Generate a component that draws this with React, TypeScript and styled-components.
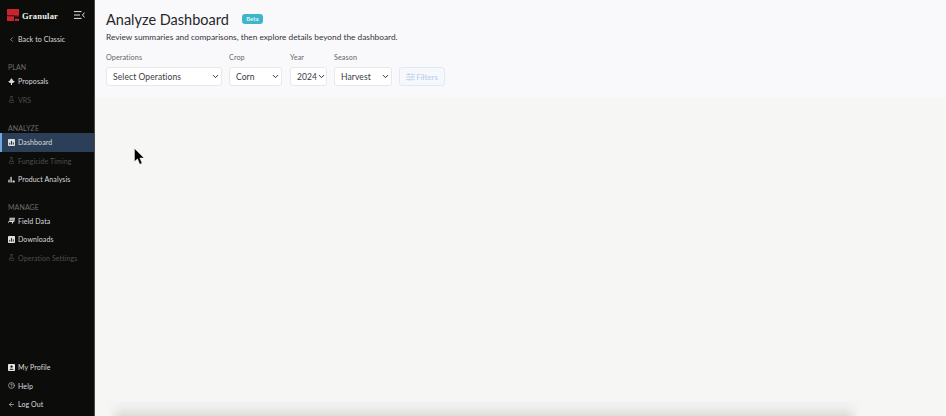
import React from 'react'
import styled, { createGlobalStyle } from 'styled-components'
import { ChevronDown, ChevronLeft, ArrowLeft, CircleHelp, FlaskConical } from 'lucide-react'

const GlobalStyle = createGlobalStyle`
  html, body {
    margin: 0;
    padding: 0;
    height: 100%;
    overflow: hidden;
    background: #f6f6f4;
    font-family: Lato, "Open Sans", sans-serif;
  }
  #root {
    height: 100%;
  }
`

const Page = styled.div`
  display: flex;
  width: 946px;
  height: 416px;
`

const Sidebar = styled.aside`
  width: 95px;
  flex: none;
  display: flex;
  flex-direction: column;
  background: #0c0c0b;
  border-right: 1px solid #4a4a4a;
  box-sizing: border-box;
`

const Brand = styled.div`
  height: 30px;
  padding: 0 9px 0 7px;
  display: flex;
  align-items: center;
`

const BrandName = styled.span`
  margin-left: 3px;
  margin-top: 1px;
  font-family: 'Liberation Serif', serif;
  font-weight: 700;
  font-size: 8.5px;
  letter-spacing: 0.2px;
  color: #f2f2f2;
  flex: 1;
`

const Section = styled.div<{ $gap: number }>`
  margin-top: ${(p) => p.$gap}px;
`

const SectionLabel = styled.div`
  height: 9px;
  line-height: 9px;
  padding-left: 8px;
  font-size: 7px;
  letter-spacing: 0.1px;
  color: #6c6c6c;
`

const NavItem = styled.div<{ $active?: boolean; $muted?: boolean }>`
  height: 18.5px;
  display: flex;
  align-items: center;
  gap: 3px;
  box-sizing: border-box;
  padding-left: ${(p) => (p.$active ? 6 : 8)}px;
  border-left: ${(p) => (p.$active ? '2px solid #6ea6e6' : 'none')};
  background: ${(p) => (p.$active ? '#2b4058' : 'transparent')};
  color: ${(p) => (p.$muted ? '#4e4e4e' : '#dcdcdc')};
  font-size: 7px;
  letter-spacing: 0.1px;
  white-space: nowrap;

  svg {
    flex: none;
    width: 7px;
    height: 7px;
  }
`

const BottomNav = styled.div`
  margin-top: auto;
  padding-bottom: 2.5px;
`

const Main = styled.main`
  flex: 1;
  display: flex;
  flex-direction: column;
  min-width: 0;
`

const Header = styled.header`
  height: 98px;
  flex: none;
  box-sizing: border-box;
  padding: 9px 0 0 11px;
  background: #f9f9fb;
`

const TitleRow = styled.div`
  display: flex;
  align-items: center;
  gap: 13px;
  height: 20px;
`

const Title = styled.h1`
  margin: 0;
  font-size: 14.5px;
  font-weight: 400;
  color: #26262a;
`

const Badge = styled.span`
  width: 21px;
  height: 10px;
  border-radius: 3px;
  background: #3fb5c9;
  color: #dff4f7;
  font-size: 6px;
  font-weight: 700;
  line-height: 10px;
  text-align: center;
`

const Subtitle = styled.p`
  margin: 3px 0 0;
  font-size: 8.3px;
  line-height: 11px;
  color: #34343a;
`

const Controls = styled.div`
  display: flex;
  align-items: flex-end;
  margin-top: 10px;
`

const Field = styled.div<{ $width: number; $gap: number }>`
  width: ${(p) => p.$width}px;
  margin-right: ${(p) => p.$gap}px;
`

const FieldLabel = styled.div`
  height: 9px;
  line-height: 9px;
  margin-bottom: 5px;
  font-size: 7.2px;
  letter-spacing: 0.1px;
  color: #66666c;
`

const SelectBox = styled.div`
  height: 19px;
  box-sizing: border-box;
  display: flex;
  align-items: center;
  justify-content: space-between;
  padding: 0 1.5px 0 6px;
  background: #fff;
  border: 1px solid #e8e8ec;
  border-radius: 3px;
  font-size: 8.5px;
  letter-spacing: 0.1px;
  color: #3a3a40;

  svg {
    flex: none;
    width: 9px;
    height: 9px;
    color: #2b2b30;
    stroke-width: 2.6;
  }
`

const FilterButton = styled.button`
  width: 46px;
  height: 19px;
  padding: 0;
  display: flex;
  align-items: center;
  justify-content: center;
  gap: 1px;
  background: #f6f8fc;
  border: 1px solid #e0e9f6;
  border-radius: 3px;
  color: #b3cdeb;
  font-family: inherit;
  font-size: 8px;

  svg {
    width: 9px;
    height: 8px;
  }
`

const Body = styled.section`
  flex: 1;
  position: relative;
  display: flex;
  align-items: flex-end;
  padding: 0 86px 0 13px;
  background: #f6f6f4;
`

const Shade = styled.div`
  width: 100%;
  height: 16px;
  background: linear-gradient(#f6f6f4 0%, #f0f0f2 20%, #efeff0 45%, #e6e6e3 70%, #ddddd9 100%);
  mask-image: linear-gradient(to right, transparent, #000 14px, #000 calc(100% - 14px), transparent);
`

const Cursor = styled.svg`
  position: absolute;
  left: 39px;
  top: 50px;
  width: 11px;
  height: 17px;
`

const LogoMark = () => (
  <svg width="12" height="12" viewBox="0 0 12 12" style={{ flex: 'none' }}>
    <rect width="12" height="6.4" fill="#c8242c" />
    <rect y="7.2" width="7" height="4.8" fill="#c8242c" />
    <rect x="7.8" y="9.6" width="4.2" height="2.4" fill="#c8242c" />
    <rect x="7.8" y="6.4" width="4.2" height="1" fill="#c8242c" />
  </svg>
)

const MenuToggle = () => (
  <svg width="11" height="8" viewBox="0 0 11 8" fill="none" stroke="#e8e8e8" strokeWidth="1">
    <path d="M0 .6h7.5M0 4h6M0 7.4h7.5M10.5 1.6L8.5 4l2 2.4" />
  </svg>
)

const LockIcon = () => <FlaskConical />

const SeedIcon = () => (
  <svg viewBox="0 0 8 8" fill="#dcdcdc">
    <path d="M4 0.3 5.2 1.6 5.8 3 7.8 3.6 6.6 5 5 5.6 4.6 6.2V8H3.4V6.2L3 5.6 1.4 5 0.2 3.6 2.2 3 2.8 1.6Z" />
  </svg>
)

const BarsIcon = () => (
  <svg viewBox="0 0 8 8" fill="#dcdcdc">
    <rect x="0.4" y="4.2" width="1.5" height="3.2" />
    <rect x="2.8" y="1" width="1.5" height="6.4" />
    <rect x="5.2" y="5.2" width="2.4" height="2.2" />
  </svg>
)

const ChartTile = () => (
  <svg viewBox="0 0 8 8">
    <rect width="8" height="8" rx="0.8" fill="#dedede" />
    <path d="M2 6.4V4.4M4 6.4V2.2M6 6.4V3.8" stroke="#1c2a3a" strokeWidth="1.1" />
  </svg>
)

const FieldIcon = () => (
  <svg viewBox="0 0 9 8" fill="#dcdcdc">
    <path d="M2 0.5H9L8 6H6.5V8H5V6H1L0 8V5.5L2 4.5Z" />
    <path d="M3 2.2H7.6M2.6 4H7.2" stroke="#0c0c0b" strokeWidth="0.6" />
  </svg>
)

const ProfileIcon = () => (
  <svg viewBox="0 0 8 8">
    <rect width="8" height="8" rx="0.8" fill="#e4e4e4" />
    <circle cx="4" cy="3" r="1.3" fill="#0c0c0b" />
    <path d="M1.6 6.6c.3-1.4 4.5-1.4 4.8 0Z" fill="#0c0c0b" />
  </svg>
)

const FilterIcon = () => (
  <svg viewBox="0 0 10 9" fill="none" stroke="currentColor" strokeWidth="0.9">
    <path d="M0 1.5h10M0 4.5h10M0 7.5h10M3 .3v2.4M7 3.3v2.4M4 6.3v2.4" />
  </svg>
)

const App = (): JSX.Element => {
  return (
    <Page>
      <GlobalStyle />
      <Sidebar>
        <Brand>
          <LogoMark />
          <BrandName>Granular</BrandName>
          <MenuToggle />
        </Brand>
        <Section $gap={0}>
          <NavItem>
            <ChevronLeft />
            Back to Classic
          </NavItem>
        </Section>
        <Section $gap={14.5}>
          <SectionLabel>PLAN</SectionLabel>
          <NavItem>
            <SeedIcon />
            Proposals
          </NavItem>
          <NavItem $muted>
            <LockIcon />
            VRS
          </NavItem>
        </Section>
        <Section $gap={15}>
          <SectionLabel>ANALYZE</SectionLabel>
          <NavItem $active>
            <ChartTile />
            Dashboard
          </NavItem>
          <NavItem $muted>
            <LockIcon />
            Fungicide Timing
          </NavItem>
          <NavItem>
            <BarsIcon />
            Product Analysis
          </NavItem>
        </Section>
        <Section $gap={14}>
          <SectionLabel>MANAGE</SectionLabel>
          <NavItem>
            <FieldIcon />
            Field Data
          </NavItem>
          <NavItem>
            <ChartTile />
            Downloads
          </NavItem>
          <NavItem $muted>
            <LockIcon />
            Operation Settings
          </NavItem>
        </Section>
        <BottomNav>
          <NavItem>
            <ProfileIcon />
            My Profile
          </NavItem>
          <NavItem>
            <CircleHelp />
            Help
          </NavItem>
          <NavItem>
            <ArrowLeft />
            Log Out
          </NavItem>
        </BottomNav>
      </Sidebar>
      <Main>
        <Header>
          <TitleRow>
            <Title>Analyze Dashboard</Title>
            <Badge>Beta</Badge>
          </TitleRow>
          <Subtitle>Review summaries and comparisons, then explore details beyond the dashboard.</Subtitle>
          <Controls>
            <Field $width={116} $gap={7}>
              <FieldLabel>Operations</FieldLabel>
              <SelectBox>
                Select Operations
                <ChevronDown />
              </SelectBox>
            </Field>
            <Field $width={53} $gap={8}>
              <FieldLabel>Crop</FieldLabel>
              <SelectBox>
                Corn
                <ChevronDown />
              </SelectBox>
            </Field>
            <Field $width={37} $gap={7}>
              <FieldLabel>Year</FieldLabel>
              <SelectBox>
                2024
                <ChevronDown />
              </SelectBox>
            </Field>
            <Field $width={58} $gap={7}>
              <FieldLabel>Season</FieldLabel>
              <SelectBox>
                Harvest
                <ChevronDown />
              </SelectBox>
            </Field>
            <FilterButton>
              <FilterIcon />
              Filters
            </FilterButton>
          </Controls>
        </Header>
        <Body>
          <Shade />
          <Cursor viewBox="0 0 11 17">
            <path d="M0.5 0.5V13.5L3.5 10.8 5.8 16.2 8 15.2 5.8 10H10Z" fill="#000" stroke="#fff" strokeWidth="0.4" />
          </Cursor>
        </Body>
      </Main>
    </Page>
  )
}

export default App
